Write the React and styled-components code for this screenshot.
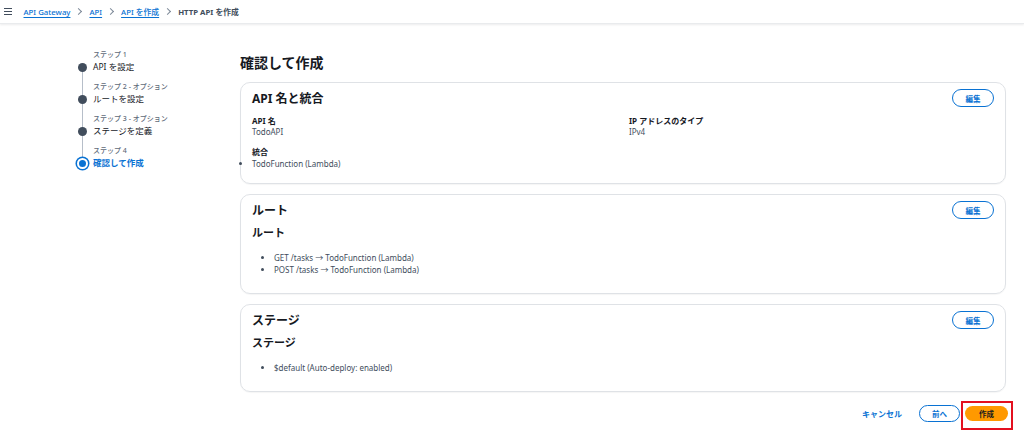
import styled, { createGlobalStyle } from "styled-components";

const GlobalStyle = createGlobalStyle`
  html, body {
    margin: 0;
    padding: 0;
    background: #ffffff;
  }
  body {
    font-family: "Noto Sans", "Open Sans", "Noto Sans CJK JP", sans-serif;
    color: #16191f;
    width: 1024px;
    height: 436px;
    overflow: hidden;
  }
`;

const steps = [
  { label: "ステップ 1", title: "API を設定" },
  { label: "ステップ 2 - オプション", title: "ルートを設定" },
  { label: "ステップ 3 - オプション", title: "ステージを定義" },
  { label: "ステップ 4", title: "確認して作成", active: true },
];

function App() {
  return (
    <Page>
      <GlobalStyle />
      <TopBar>
        <Hamburger>
          <span />
          <span />
          <span />
        </Hamburger>
        <Crumbs>
          <CrumbLink>API Gateway</CrumbLink>
          <Chevron />
          <CrumbLink>API</CrumbLink>
          <Chevron />
          <CrumbLink>API を作成</CrumbLink>
          <Chevron />
          <CrumbCurrent>HTTP API を作成</CrumbCurrent>
        </Crumbs>
      </TopBar>

      <Layout>
        <StepNav>
          {steps.map((s, i) => (
            <Step key={s.label} last={i === steps.length - 1}>
              <StepLabel>{s.label}</StepLabel>
              <Dot active={s.active} />
              <StepTitle active={s.active}>{s.title}</StepTitle>
            </Step>
          ))}
        </StepNav>

        <Main>
          <PageTitle>確認して作成</PageTitle>

          <Card>
            <CardHead>
              <CardTitle>API 名と統合</CardTitle>
              <EditButton>編集</EditButton>
            </CardHead>
            <Fields>
              <Field>
                <FieldKey>API 名</FieldKey>
                <FieldValue>TodoAPI</FieldValue>
              </Field>
              <Field>
                <FieldKey>IP アドレスのタイプ</FieldKey>
                <FieldValue>IPv4</FieldValue>
              </Field>
              <Field>
                <FieldKey>統合</FieldKey>
                <Bullets flush>
                  <li>TodoFunction (Lambda)</li>
                </Bullets>
              </Field>
            </Fields>
          </Card>

          <Card tall>
            <CardHead>
              <CardTitle>ルート</CardTitle>
              <EditButton>編集</EditButton>
            </CardHead>
            <SubTitle>ルート</SubTitle>
            <Bullets>
              <li>GET /tasks → TodoFunction (Lambda)</li>
              <li>POST /tasks → TodoFunction (Lambda)</li>
            </Bullets>
          </Card>

          <Card>
            <CardHead>
              <CardTitle>ステージ</CardTitle>
              <EditButton>編集</EditButton>
            </CardHead>
            <SubTitle>ステージ</SubTitle>
            <Bullets>
              <li>$default (Auto-deploy: enabled)</li>
            </Bullets>
          </Card>

          <Actions>
            <LinkButton>キャンセル</LinkButton>
            <OutlineButton>前へ</OutlineButton>
            <Highlight>
              <PrimaryButton>作成</PrimaryButton>
            </Highlight>
          </Actions>
        </Main>
      </Layout>
    </Page>
  );
}

export default App;

const Page = styled.div`
  display: flex;
  flex-direction: column;
  width: 1024px;
  height: 436px;
`;

const TopBar = styled.header`
  height: 23px;
  display: flex;
  align-items: center;
  gap: 12px;
  padding-left: 4px;
  border-bottom: 1px solid #e9ebed;
  box-shadow: 0 1px 2px rgba(0, 7, 22, 0.08);
`;

const Hamburger = styled.div`
  display: flex;
  flex-direction: column;
  gap: 1.6px;
  width: 7.5px;
  span {
    display: block;
    height: 1.4px;
    background: #414d5c;
  }
`;

const Crumbs = styled.nav`
  display: flex;
  align-items: center;
  gap: 6px;
  font-size: 7.8px;
`;

const CrumbLink = styled.a`
  color: #0972d3;
  text-decoration: underline;
  text-underline-offset: 2px;
  font-weight: 500;
`;

const CrumbCurrent = styled.span`
  color: #414d5c;
  font-weight: 700;
`;

const Chevron = styled.span`
  width: 4px;
  height: 4px;
  border-top: 1.2px solid #7d8998;
  border-right: 1.2px solid #7d8998;
  transform: rotate(45deg);
  margin: 0 2px 0 0;
`;

const Layout = styled.div`
  display: flex;
  padding: 25px 18px 0 76px;
`;

const StepNav = styled.ol`
  list-style: none;
  margin: 0;
  padding: 0;
  width: 164px;
  flex-shrink: 0;
`;

const Step = styled.li`
  position: relative;
  display: grid;
  grid-template-columns: 12px 1fr;
  grid-auto-rows: 12px;
  align-content: start;
  column-gap: 5px;
  height: 32px;

  &::before {
    content: "";
    display: ${(p) => (p.last ? "none" : "block")};
    position: absolute;
    left: 5.5px;
    top: 18px;
    height: 32px;
    width: 1px;
    background: #b6bec9;
  }
`;

const StepLabel = styled.span`
  grid-column: 2;
  font-size: 7px;
  line-height: 12px;
  color: #5f6b7a;
  font-weight: 500;
`;

const Dot = styled.span`
  grid-column: 1;
  grid-row: 2;
  align-self: center;
  justify-self: center;
  box-sizing: border-box;
  width: ${(p) => (p.active ? "11px" : "9px")};
  height: ${(p) => (p.active ? "11px" : "9px")};
  border-radius: 50%;
  position: relative;
  z-index: 1;
  background: ${(p) => (p.active ? "#0972d3" : "#414d5c")};
  border: ${(p) => (p.active ? "2.5px solid #fff" : "none")};
  box-shadow: ${(p) => (p.active ? "0 0 0 1.5px #0972d3" : "none")};
`;

const StepTitle = styled.span`
  grid-column: 2;
  grid-row: 2;
  font-size: 8.5px;
  line-height: 12px;
  font-weight: ${(p) => (p.active ? 700 : 400)};
  color: ${(p) => (p.active ? "#0972d3" : "#16191f")};
`;

const Main = styled.main`
  flex: 1;
  display: flex;
  flex-direction: column;
  gap: 10px;
`;

const PageTitle = styled.h1`
  margin: 4px 0 -1px;
  font-size: 14px;
  line-height: 20px;
  font-weight: 700;
`;

const Card = styled.section`
  border: 1px solid #dfe2e6;
  border-radius: 10px;
  padding: 5px 11px 0 11px;
  height: ${(p) => (p.tall ? "100px" : "88px")};
  box-sizing: border-box;
  box-shadow: 0 1px 1px rgba(0, 7, 22, 0.04);

  &:first-of-type {
    height: 102px;
  }
`;

const CardHead = styled.div`
  display: flex;
  align-items: center;
  justify-content: space-between;
  height: 20px;
`;

const CardTitle = styled.h2`
  margin: 0;
  font-size: 12px;
  font-weight: 700;
`;

const EditButton = styled.button`
  font-family: inherit;
  width: 42px;
  height: 18px;
  border: 1.5px solid #0972d3;
  border-radius: 10px;
  background: #fff;
  color: #0972d3;
  font-size: 7.5px;
  font-weight: 700;
  padding: 0;
`;

const Fields = styled.div`
  display: grid;
  grid-template-columns: 1fr 1fr;
  column-gap: 12px;
  row-gap: 9px;
  margin-top: 7px;
`;

const Field = styled.div`
  display: flex;
  flex-direction: column;
`;

const FieldKey = styled.span`
  font-size: 8px;
  line-height: 11px;
  font-weight: 700;
`;

const FieldValue = styled.span`
  font-size: 8px;
  line-height: 11px;
  color: #414d5c;
`;

const SubTitle = styled.h3`
  margin: 5px 0 0;
  font-size: 11px;
  line-height: 16px;
  font-weight: 700;
`;

const Bullets = styled.ul`
  margin: ${(p) => (p.flush ? "1px 0 0" : "11px 0 0")};
  padding-left: ${(p) => (p.flush ? "0" : "22px")};
  list-style: disc outside;
  font-size: 8px;
  line-height: 12px;
  color: #414d5c;
`;

const Actions = styled.div`
  display: flex;
  justify-content: flex-end;
  align-items: center;
  gap: 1px;
  margin-top: -5px;
  margin-right: -7px;
`;

const LinkButton = styled.button`
  font-family: inherit;
  border: none;
  background: none;
  color: #0972d3;
  font-size: 8px;
  font-weight: 700;
  padding: 0;
  margin-right: 16px;
`;

const OutlineButton = styled(EditButton)`
  width: 41px;
  height: 17px;
  border-radius: 9px;
`;

const Highlight = styled.span`
  display: inline-flex;
  border: 2px solid #e3101f;
  padding: 3px 3px 7px 2px;
  margin-top: 4px;
`;

const PrimaryButton = styled.button`
  font-family: inherit;
  width: 43px;
  height: 15px;
  border: none;
  border-radius: 8px;
  background: #ff9900;
  color: #16191f;
  font-size: 7.5px;
  font-weight: 700;
  padding: 0;
`;
